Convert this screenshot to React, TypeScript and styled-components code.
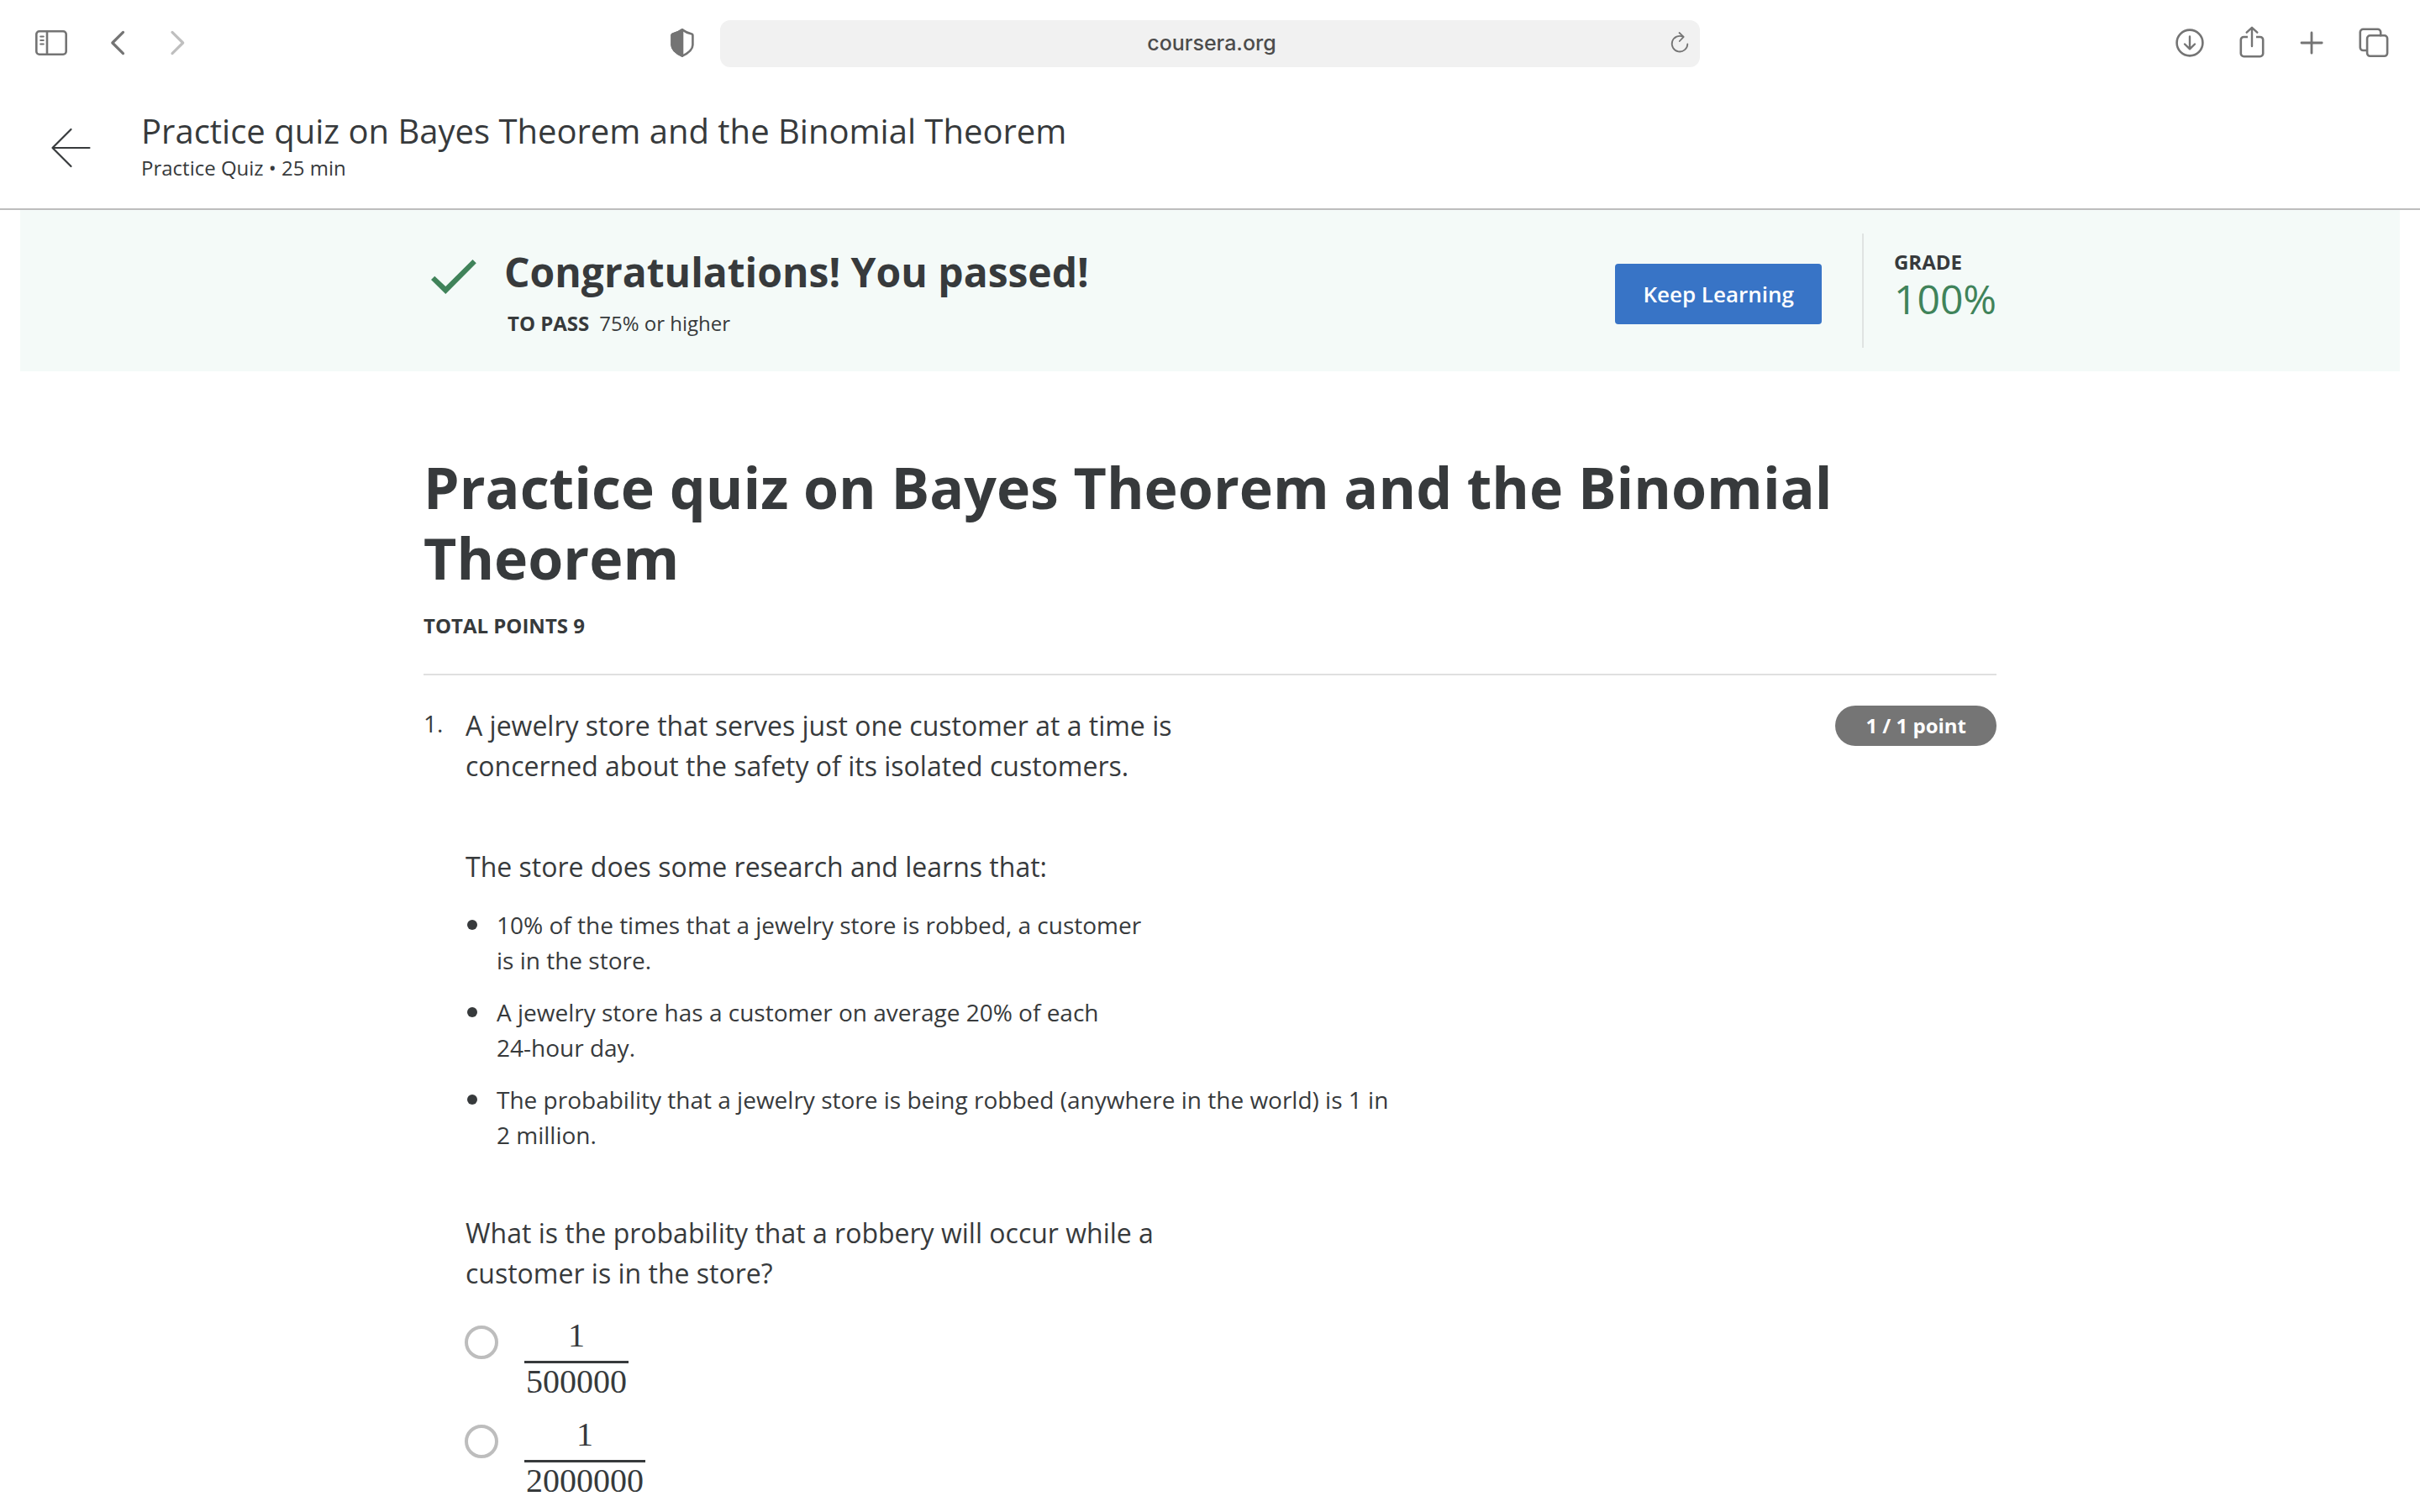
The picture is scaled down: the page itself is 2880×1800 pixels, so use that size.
import React from "react";
import styled, { createGlobalStyle } from "styled-components";

const ink = "#373a3c";
const chrome = "#747474";
const green = "#40835a";

const GlobalStyle = createGlobalStyle`
  *, *::before, *::after { box-sizing: border-box; }
  html, body { margin: 0; background: #fff; }
  body {
    color: ${ink};
    font-family: "Open Sans", "Noto Sans", sans-serif;
    font-size: 28px;
    line-height: 42px;
  }
  h1, h2, p, ul { margin: 0; padding: 0; }
  button { font: inherit; color: inherit; border: 0; background: none; padding: 0; cursor: pointer; }
`;

const Toolbar = styled.nav`
  display: grid;
  grid-template-columns: minmax(0, 1fr) minmax(0, 1166px) minmax(0, 1fr);
  align-items: center;
  padding: 24px 36px;
`;

const ToolGroup = styled.div<{ $align?: string; $gap: number }>`
  display: flex;
  align-items: center;
  justify-content: ${(p) => p.$align ?? "flex-start"};
  gap: ${(p) => p.$gap}px;
`;

const ToolSpacer = styled.span`
  flex: 1;
`;

const IconButton = styled.button<{ $faded?: boolean }>`
  display: flex;
  align-items: center;
  justify-content: center;
  height: 48px;
  padding-bottom: 2px;
  color: ${(p) => (p.$faded ? "#bfbfbf" : chrome)};
`;

const ShieldButton = styled(IconButton)`
  margin-right: 30px;
`;

const AddressBar = styled.div`
  display: flex;
  align-items: center;
  height: 56px;
  padding: 0 12px 0 40px;
  border-radius: 12px;
  background: #f1f1f1;
`;

const AddressInput = styled.input`
  flex: 1;
  min-width: 0;
  padding: 0 0 2px;
  border: 0;
  outline: 0;
  background: transparent;
  color: #4c4c4c;
  font-family: Inter, Roboto, sans-serif;
  font-size: 25px;
  font-weight: 500;
  line-height: 32px;
  text-align: center;
`;

const Header = styled.header`
  display: flex;
  align-items: center;
  gap: 56px;
  min-height: 146px;
  padding: 0 56px;
  border-bottom: 2px solid #bdbdbd;
`;

const BackLink = styled.a`
  display: flex;
  color: ${ink};
`;

const HeaderText = styled.div`
  padding-bottom: 8px;
`;

const HeaderTitle = styled.p`
  font-size: 40px;
  line-height: 56px;
`;

const HeaderMeta = styled.p`
  font-size: 24px;
  line-height: 32px;
`;

const Banner = styled.section`
  margin: 0 24px;
  padding: 28px 24px;
  background: #f4faf8;
`;

const Column = styled.div`
  width: 100%;
  max-width: 1872px;
  margin: 0 auto;
`;

const BannerRow = styled(Column)`
  display: flex;
  align-items: stretch;
  min-height: 136px;
`;

const CheckMark = styled.svg`
  flex: none;
  margin: 30px 32px 0 8px;
`;

const BannerText = styled.div`
  flex: 1;
  display: flex;
  flex-direction: column;
  gap: 13px;
  padding-top: 14px;
`;

const BannerTitle = styled.h2`
  font-size: 48px;
  font-weight: 700;
  line-height: 64px;
`;

const PassRule = styled.p`
  display: flex;
  gap: 12px;
  padding-left: 4px;
  font-size: 24px;
  line-height: 32px;
`;

const PrimaryButton = styled.button`
  align-self: center;
  height: 72px;
  margin: 8px 48px 0 0;
  padding: 0 33px;
  border-radius: 4px;
  background: #3874c6;
  color: #fff;
  font-size: 26px;
  font-weight: 600;
  line-height: 40px;
`;

const Grade = styled.div`
  display: flex;
  flex-direction: column;
  justify-content: center;
  padding: 0 0 12px 36px;
  border-left: 2px solid #dfe3e2;
`;

const Label = styled.span`
  font-size: 24px;
  font-weight: 700;
  line-height: 32px;
`;

const GradeValue = styled.span`
  color: ${green};
  font-size: 48px;
  line-height: 56px;
`;

const Main = styled.main`
  padding: 96px 48px 0;
`;

const QuizTitle = styled.h1`
  margin-bottom: 23px;
  font-size: 68px;
  font-weight: 700;
  line-height: 84px;
`;

const QuizMeta = styled.div`
  display: flex;
  padding-bottom: 41px;
  border-bottom: 2px solid #e0e0e0;
`;

const Question = styled.section`
  display: grid;
  grid-template-columns: 50px minmax(0, 1fr) auto;
  align-items: start;
  padding-top: 36px;
`;

const Prompt = styled.div`
  display: flex;
  flex-direction: column;
  gap: 72px;
`;

const PromptText = styled.p`
  font-size: 32px;
  line-height: 48px;
`;

const Facts = styled.ul`
  display: flex;
  flex-direction: column;
  gap: 20px;
  margin-top: 24px;
  list-style: none;
`;

const Fact = styled.li`
  display: flex;
  gap: 23px;

  &::before {
    content: "";
    flex: none;
    width: 12px;
    height: 12px;
    margin: 15px 0 0 2px;
    border-radius: 50%;
    background: ${ink};
  }
`;

const PointsPill = styled.span`
  padding: 8px 36px;
  border-radius: 24px;
  background: #757575;
  color: #fff;
  font-size: 24px;
  font-weight: 700;
  line-height: 32px;
`;

const Options = styled.div`
  display: flex;
  flex-direction: column;
  align-items: flex-start;
  gap: 19px;
  margin-top: 28px;
`;

const Option = styled.label`
  display: flex;
  align-items: flex-start;
  gap: 31px;
  cursor: pointer;
`;

const Radio = styled.input`
  appearance: none;
  width: 40px;
  height: 40px;
  margin: 10px 0 0 -1px;
  border: 4px solid #bdbdbd;
  border-radius: 50%;
  background: #fff;

  &:checked {
    border-width: 12px;
    border-color: #3874c6;
  }
`;

const Fraction = styled.span`
  display: flex;
  flex-direction: column;
  font-family: "Liberation Serif", "Times New Roman", serif;
  font-size: 40px;
  line-height: 44px;
  text-align: center;
`;

const Numerator = styled.span`
  padding-bottom: 8px;
  border-bottom: 3px solid ${ink};
`;

const Denominator = styled.span`
  padding: 0 2px;
`;

const line = {
  fill: "none",
  stroke: "currentColor",
  strokeWidth: 3.2,
  strokeLinecap: "round" as const,
  strokeLinejoin: "round" as const,
};

const SidebarIcon = () => (
  <svg width="46" height="34" viewBox="-4 0 46 34" {...line} strokeWidth={2.6}>
    <rect x="3.3" y="3.3" width="35.4" height="27.4" rx="3.5" />
    <path d="M16 3.5v27" />
    <path d="M8.2 9.5h3.6M8.2 14h3.6M8.2 18.5h3.6" strokeWidth={2} />
  </svg>
);

const ChevronLeft = () => (
  <svg width="20" height="32" viewBox="0 0 20 32" {...line}>
    <path d="M16.5 3.4 3.8 16 16.5 28.6" />
  </svg>
);

const ChevronRight = () => (
  <svg width="24" height="32" viewBox="-4 0 24 32" {...line}>
    <path d="M3 3.4 15.7 16 3 28.6" />
  </svg>
);

const ShieldIcon = () => (
  <svg width="30" height="36" viewBox="0 0 30 36" {...line} strokeWidth={2.6}>
    <path d="M15 2.4c3.3 2.5 7 4 10.6 4.8 1 .2 1.8 1 1.8 2.1v11.2c0 6.3-5.4 9.8-12.4 13.1C8 30.3 2.6 26.8 2.6 20.5V9.3c0-1.1.8-1.9 1.8-2.1C8 6.4 11.7 4.9 15 2.4z" />
    <path d="M15 2.4v31.2C8 30.3 2.6 26.8 2.6 20.5V9.3c0-1.1.8-1.9 1.8-2.1C8 6.4 11.7 4.9 15 2.4z" fill="currentColor" />
  </svg>
);

const ReloadIcon = () => (
  <svg width="24" height="28" viewBox="0 0 24 28" {...line} strokeWidth={1.8}>
    <path d="M16 6.8A9.3 9.3 0 1 0 21.3 15.5" />
    <path d="M11.5 2l5.2 4.8-4.9 5.2" />
  </svg>
);

const DownloadIcon = () => (
  <svg width="36" height="36" viewBox="0 0 36 36" {...line} strokeWidth={2.6}>
    <circle cx="18" cy="18" r="15.4" />
    <path d="M18 10.5v14.5M12 19.5l6 5.8 6-5.8" strokeWidth={2.4} />
  </svg>
);

const ShareIcon = () => (
  <svg width="32" height="42" viewBox="0 0 32 42" {...line} strokeWidth={2.6}>
    <path d="M11 14H6.3A3.5 3.5 0 0 0 2.8 17.5v16.2a3.5 3.5 0 0 0 3.5 3.5h19.4a3.5 3.5 0 0 0 3.5-3.5V17.5a3.5 3.5 0 0 0-3.5-3.5H21" strokeLinecap="butt" />
    <path d="M16 25V3.2M9.7 8.7 16 2.8l6.3 5.9" strokeWidth={2.4} />
  </svg>
);

const PlusIcon = () => (
  <svg width="30" height="30" viewBox="0 0 30 30" {...line} strokeWidth={2.8}>
    <path d="M15 3v24.2M3 15h24.2" />
  </svg>
);

const TabsIcon = () => (
  <svg width="38" height="38" viewBox="0 0 38 38" {...line} strokeWidth={2.6}>
    <path d="M10 28H6.3A3.5 3.5 0 0 1 2.8 24.5V6.3A3.5 3.5 0 0 1 6.3 2.8h17.4a3.5 3.5 0 0 1 3.5 3.5v4" />
    <rect x="11.1" y="10.3" width="24" height="24.5" rx="3.5" />
  </svg>
);

const BackArrow = () => (
  <svg width="56" height="56" viewBox="0 0 56 56" {...line} strokeWidth={2.2}>
    <path d="M28.5 6 6.5 28 28.5 50M6.5 28H50.5" />
  </svg>
);

const facts: [string, string][] = [
  ["10% of the times that a jewelry store is robbed, a customer", "is in the store."],
  ["A jewelry store has a customer on average 20% of each", "24-hour day."],
  ["The probability that a jewelry store is being robbed (anywhere in the world) is 1 in", "2 million."],
];

const denominators = ["500000", "2000000"];

export default function App() {
  return (
    <>
      <GlobalStyle />
      <Toolbar aria-label="Browser">
        <ToolGroup $gap={48}>
          <IconButton aria-label="Show sidebar"><SidebarIcon /></IconButton>
          <IconButton aria-label="Back"><ChevronLeft /></IconButton>
          <IconButton aria-label="Forward" $faded><ChevronRight /></IconButton>
          <ToolSpacer />
          <ShieldButton aria-label="Privacy report"><ShieldIcon /></ShieldButton>
        </ToolGroup>
        <AddressBar>
          <AddressInput aria-label="Address" defaultValue="coursera.org" />
          <IconButton aria-label="Reload"><ReloadIcon /></IconButton>
        </AddressBar>
        <ToolGroup $align="flex-end" $gap={40}>
          <IconButton aria-label="Downloads"><DownloadIcon /></IconButton>
          <IconButton aria-label="Share"><ShareIcon /></IconButton>
          <IconButton aria-label="New tab"><PlusIcon /></IconButton>
          <IconButton aria-label="Tab overview"><TabsIcon /></IconButton>
        </ToolGroup>
      </Toolbar>

      <Header>
        <BackLink href="#" aria-label="Back to course"><BackArrow /></BackLink>
        <HeaderText>
          <HeaderTitle>Practice quiz on Bayes Theorem and the Binomial Theorem</HeaderTitle>
          <HeaderMeta>Practice Quiz • 25 min</HeaderMeta>
        </HeaderText>
      </Header>

      <Banner>
        <BannerRow>
          <CheckMark width="56" height="44" viewBox="0 0 56 44" aria-hidden="true">
            <path d="M1 25 5.3 20.7 18.3 33 50.5 1 54.8 5.3 18.3 42z" fill={green} />
          </CheckMark>
          <BannerText>
            <BannerTitle>Congratulations! You passed!</BannerTitle>
            <PassRule>
              <Label>TO PASS</Label>
              <span>75% or higher</span>
            </PassRule>
          </BannerText>
          <PrimaryButton>Keep Learning</PrimaryButton>
          <Grade>
            <Label>GRADE</Label>
            <GradeValue>100%</GradeValue>
          </Grade>
        </BannerRow>
      </Banner>

      <Main>
        <Column>
          <QuizTitle>Practice quiz on Bayes Theorem and the Binomial Theorem</QuizTitle>
          <QuizMeta><Label>TOTAL POINTS 9</Label></QuizMeta>
          <Question>
            <span>1.</span>
            <div>
              <Prompt>
                <PromptText>
                  A jewelry store that serves just one customer at a time is<br />
                  concerned about the safety of its isolated customers.
                </PromptText>
                <div>
                  <PromptText>The store does some research and learns that:</PromptText>
                  <Facts>
                    {facts.map(([first, second]) => (
                      <Fact key={first}>
                        <span>{first}<br />{second}</span>
                      </Fact>
                    ))}
                  </Facts>
                </div>
                <PromptText id="q1-prompt">
                  What is the probability that a robbery will occur while a<br />
                  customer is in the store?
                </PromptText>
              </Prompt>
              <Options role="radiogroup" aria-labelledby="q1-prompt">
                {denominators.map((d) => (
                  <Option key={d} htmlFor={`q1-${d}`}>
                    <Radio type="radio" name="q1" id={`q1-${d}`} value={d} />
                    <Fraction>
                      <Numerator>1</Numerator>
                      <Denominator>{d}</Denominator>
                    </Fraction>
                  </Option>
                ))}
              </Options>
            </div>
            <PointsPill>1 / 1 point</PointsPill>
          </Question>
        </Column>
      </Main>
    </>
  );
}
